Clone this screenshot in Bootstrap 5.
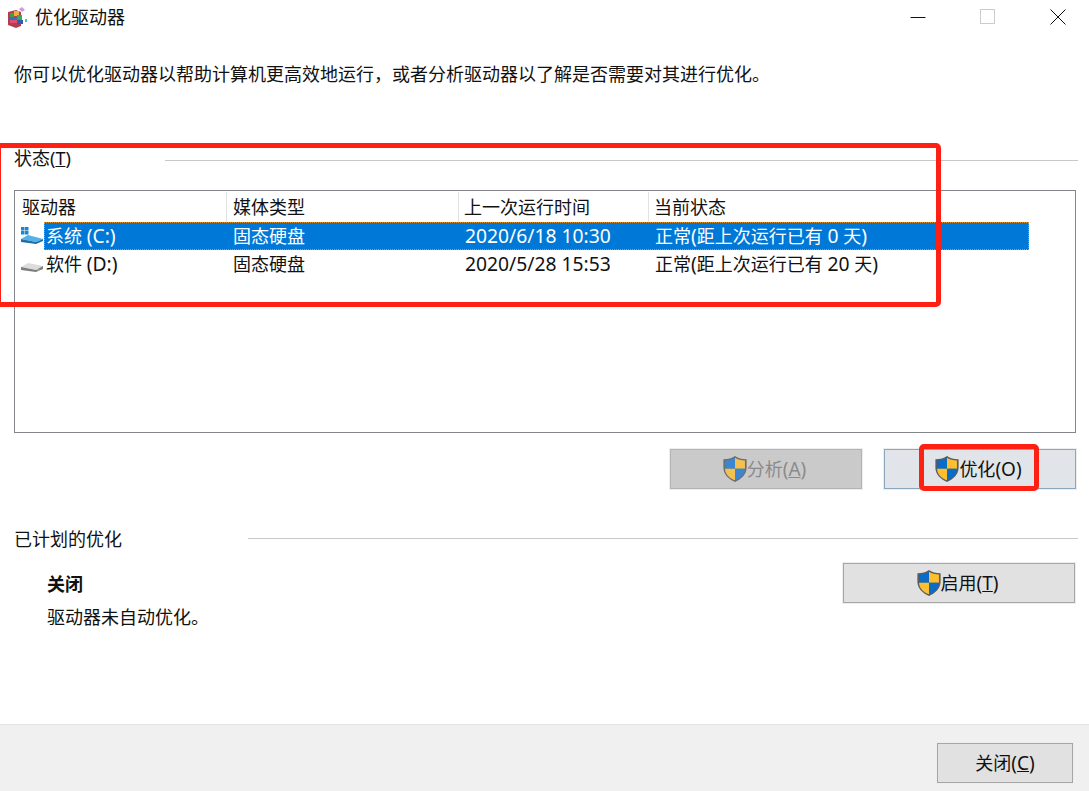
<!DOCTYPE html>
<html lang="zh-CN">
<head>
<meta charset="utf-8">
<title>优化驱动器</title>
<link rel="stylesheet" href="https://cdn.jsdelivr.net/npm/bootstrap@5.3.0/dist/css/bootstrap.min.css">
<style>
html,body{margin:0;height:791px;overflow:hidden;background:#fff}
body{font-family:"Noto Sans","Noto Sans CJK SC",sans-serif;font-size:18px;line-height:24px;color:#111}
.win{position:relative;width:1089px;height:791px}
.tbar{height:34px;padding-left:7px}
.tbar-title{margin-left:7px;font-size:18px}
.wbtns{width:179px;padding-right:23px}
.intro{padding:28px 14px 0;height:88px}
.grp-head{padding-left:14px;padding-right:11px;height:20px;margin-top:26px}
.grp-head span{line-height:20px}
.rule{height:1px;background:#c8c8c8;margin-top:12px}
.r1{margin-left:94px}.r2{margin-left:126px}
.grp2 .rule{margin-top:9px}
.lbox{margin:22px 13px 0 14px;height:243px;border:1px solid #83878c;padding:1px 0 0 1px}
.lhead,.lrow{width:1014px}
.lhead{height:30px}
.c1{width:210px;padding-left:6px}.c2{width:232px;padding-left:6px}.c3{width:190px;padding-left:6px}.c4{width:380px;padding-left:6px}
.lhead>div{border-left:1px solid #e2e2e2;height:30px;line-height:30px}
.lhead>div:first-child{border-left:0}
.lhead .c3,.lhead .c4{padding-left:5px}
.lrow{height:28px;line-height:28px}
.lrow .c2,.lrow .c3,.lrow .c4{padding-left:7px}
.ico{width:28px;display:flex}
.cell-sel{background:#0078d7;color:#fff;outline:1px dotted #e0922e;outline-offset:-1px}
.sel-wrap{margin-left:28px;width:985px;display:flex}
.sel-wrap .namecell{width:182px;padding-left:2px}
.dt{font-size:19.3px}
.bbar{padding:16px 13px 0 0;height:56px;gap:22px}
.wbtn{width:192px;height:40px;border:1px solid #a6a6a6;box-shadow:0 0 0 1px #ededed;background:#e1e1e1;color:#111;font-size:18px;line-height:1;border-radius:0;padding:0 3px 0 0;display:flex;align-items:center;justify-content:center}
.wbtn.dis{background:#cacaca;border-color:#b4b4b4;color:#8a8a8a;opacity:1}
.wbtn.focus-b{background:#e1e4e8;border-color:#8ea6bd}
.wbtn.w232{width:232px}
.wbtn.w136{width:136px;padding:0}
.wbtn u{text-underline-offset:1px}
.wbtn .lp{font-size:19px}
.sched{padding:14px 14px 0 47px;height:106px}
.sched .ttl{font-weight:700;line-height:24px;margin-top:9px}
.sched .dsc{margin-top:9px}
.grp2{margin-top:40px}
.foot{position:absolute;left:0;right:0;bottom:0;height:67px;background:#f0f0f0;border-top:1px solid #e3e3e3;padding:18px 16px 0 0}
.mark-a{position:absolute;border:5px solid #ff2014;border-radius:5px;pointer-events:none}
.mark-list{left:-4px;top:143px;width:945px;height:164px}
.mark-btn{left:919px;top:444px;width:120px;height:47px}
</style>
</head>
<body>
<div class="win">
  <div class="tbar d-flex align-items-center justify-content-between">
    <div class="d-flex align-items-center">
      <svg width="21" height="22" viewBox="0 0 21 22"><path d="M1 6l8-2 5 2v14l-5 2-8-3z" fill="#b23d52"/><rect x="3" y="7" width="4" height="4" fill="#4c9a3c"/><rect x="7" y="5" width="5" height="5" fill="#e6b43a"/><rect x="3" y="11" width="8" height="3" fill="#2f6fc4"/><rect x="3" y="14" width="8" height="3" fill="#e0506a"/><rect x="10" y="9" width="5" height="5" fill="#39a65c"/><rect x="10" y="14" width="6" height="4" fill="#2b5fa8"/><path d="M12 3l3-2 3 3-3 2z" fill="#c99ce6"/><rect x="18" y="13" width="2" height="3" fill="#5ab4e6"/></svg>
      <span class="tbar-title">优化驱动器</span>
    </div>
    <div class="wbtns d-flex align-items-center justify-content-between">
      <svg width="16" height="16" viewBox="0 0 16 16"><path d="M0.500 8.500h15" stroke="#111" stroke-width="1"/></svg>
      <svg width="16" height="16" viewBox="0 0 16 16"><rect x="0.500" y="0.500" width="14" height="14" fill="none" stroke="#ccc"/></svg>
      <svg width="16" height="16" viewBox="0 0 16 16"><path d="M0.500 0.500l15 15M15.500 0.500l-15 15" stroke="#111" stroke-width="1"/></svg>
    </div>
  </div>
  <div class="intro">你可以优化驱动器以帮助计算机更高效地运行，或者分析驱动器以了解是否需要对其进行优化。</div>
  <div class="grp-head d-flex"><span>状态(<u>T</u>)</span><div class="rule r1 flex-grow-1"></div></div>
  <div class="lbox">
    <div class="lhead d-flex"><div class="c1">驱动器</div><div class="c2">媒体类型</div><div class="c3">上一次运行时间</div><div class="c4">当前状态</div></div>
    <div class="lrow d-flex position-relative">
      <div class="ico position-absolute top-0 start-0 h-100 align-items-center ps-1">
        <svg width="24" height="20" viewBox="0 0 24 20"><g fill="#1a86d8"><rect x="1" y="1" width="3.500" height="3.500"/><rect x="5" y="1" width="3.500" height="3.500"/><rect x="1" y="5" width="3.500" height="3.500"/><rect x="5" y="5" width="3.500" height="3.500"/></g><path d="M1 13l7-4 15 4-7 3z" fill="#56b0e6"/><path d="M1 13l15 3 7-3v2l-7 3-15-2z" fill="#1f6ea8"/></svg>
      </div>
      <div class="sel-wrap cell-sel">
        <div class="namecell">系统 <span class="dt">(C:)</span></div><div class="c2">固态硬盘</div><div class="c3 dt">2020/6/18 10:30</div><div class="c4">正常<span class="dt">(</span>距上次运行已有 <span class="dt">0</span> 天<span class="dt">)</span></div>
      </div>
    </div>
    <div class="lrow d-flex position-relative">
      <div class="ico position-absolute top-0 start-0 h-100 align-items-center ps-1">
        <svg width="24" height="20" viewBox="0 0 24 20"><path d="M1 13l7-4 15 3-7 4z" fill="#dcdcdc"/><path d="M1 13l15 3 7-4v3l-7 3-15-2z" fill="#7d7d7d"/><rect x="17" y="15.500" width="3" height="1" fill="#8fd08f"/></svg>
      </div>
      <div class="sel-wrap">
        <div class="namecell">软件 <span class="dt">(D:)</span></div><div class="c2">固态硬盘</div><div class="c3 dt">2020/5/28 15:53</div><div class="c4">正常<span class="dt">(</span>距上次运行已有 <span class="dt">20</span> 天<span class="dt">)</span></div>
      </div>
    </div>
  </div>
  <div class="bbar d-flex justify-content-end">
    <button type="button" class="wbtn dis btn" disabled><svg width="24" height="26" viewBox="2.500 1.500 21 23.500"><use href="#shield-dim" width="26" height="26"/></svg><span>分析<span class="lp">(<u>A</u>)</span></span></button>
    <button type="button" class="wbtn focus-b btn"><svg width="24" height="26" viewBox="2.500 1.500 21 23.500"><use href="#shield" width="26" height="26"/></svg><span>优化<span class="lp">(O)</span></span></button>
  </div>
  <div class="grp-head d-flex grp2"><span>已计划的优化</span><div class="rule r2 flex-grow-1"></div></div>
  <div class="sched d-flex justify-content-between">
    <div><div class="ttl">关闭</div><div class="dsc">驱动器未自动优化。</div></div>
    <div><button type="button" class="wbtn w232 btn"><svg width="24" height="26" viewBox="2.500 1.500 21 23.500"><use href="#shield" width="26" height="26"/></svg><span>启用<span class="lp">(<u>T</u>)</span></span></button></div>
  </div>
  <div class="foot d-flex justify-content-end"><button type="button" class="wbtn w136 btn"><span>关闭<span class="lp">(<u>C</u>)</span></span></button></div>
  <div class="mark-a mark-list"></div>
  <div class="mark-a mark-btn"></div>
</div>
<svg width="0" height="0" class="position-absolute">
  <defs>
    <symbol id="shield" viewBox="0 0 26 26">
      <path d="M13 1.500C16 3.500 19 4.500 23.500 4.500V12C23.500 18 19 22.500 13 25C7 22.500 2.500 18 2.500 12V4.500C7 4.500 10 3.500 13 1.500Z" fill="#5c5c5c"/>
      <path d="M13 3V13H4V5.500C7.500 5.500 10.500 4.500 13 3Z" fill="#0a6cc8"/>
      <path d="M13 3C15.500 4.500 18.500 5.500 22 5.500V13H13Z" fill="#fdbf2e"/>
      <path d="M4 13H13V23.500C8 21.500 4 18 4 13Z" fill="#fdbf2e"/>
      <path d="M13 13H22C22 18 18 21.500 13 23.500Z" fill="#0a6cc8"/>
    </symbol>
    <symbol id="shield-dim" viewBox="0 0 26 26">
      <path d="M13 1.500C16 3.500 19 4.500 23.500 4.500V12C23.500 18 19 22.500 13 25C7 22.500 2.500 18 2.500 12V4.500C7 4.500 10 3.500 13 1.500Z" fill="#6e6e6e"/>
      <path d="M13 3V13H4V5.500C7.500 5.500 10.500 4.500 13 3Z" fill="#3a86d0"/>
      <path d="M13 3C15.500 4.500 18.500 5.500 22 5.500V13H13Z" fill="#f4c050"/>
      <path d="M4 13H13V23.500C8 21.500 4 18 4 13Z" fill="#f4c050"/>
      <path d="M13 13H22C22 18 18 21.500 13 23.500Z" fill="#3a86d0"/>
    </symbol>
  </defs>
</svg>
<script src="https://cdn.jsdelivr.net/npm/bootstrap@5.3.0/dist/js/bootstrap.bundle.min.js"></script>
</body>
</html>
